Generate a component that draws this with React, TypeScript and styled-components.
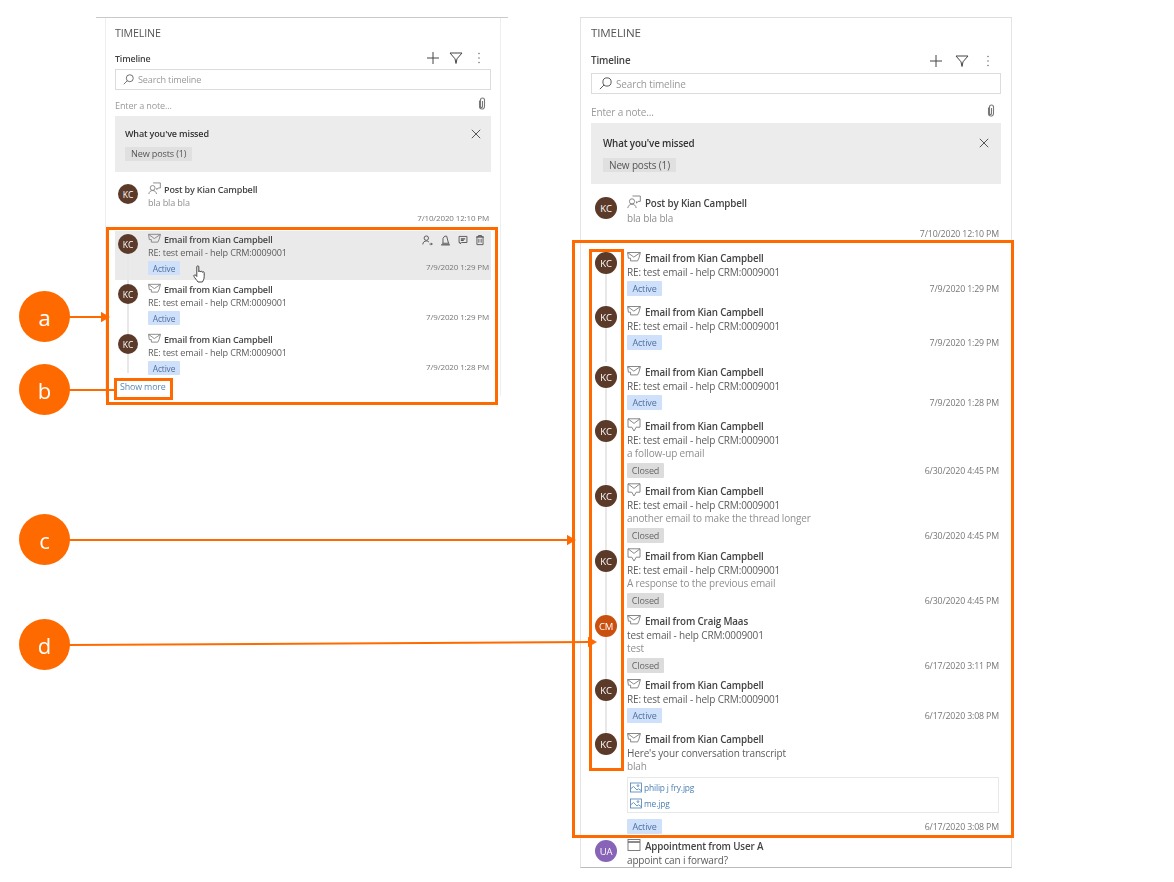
import React from "react";
import styled, { createGlobalStyle, ThemeProvider } from "styled-components";

const ORANGE = "#ff6a00";

const small = {
  label: 10.7,
  labelH: 29,
  toolH: 22,
  toolTitle: 8.9,
  toolGap: 9,
  toolPad: 5,
  noteH: 26,
  notePad: 4,
  clipPad: 5,
  missedX: 10,
  missedTop: 11,
  missedGap: 7,
  missedBottom: 11,
  title: 9,
  body: 9.1,
  date: 8,
  dateLift: 3,
  pill: 8.4,
  avatar: 20,
  avatarText: 8.5,
  avatarTop: 1,
  rowX: 3,
  rowTop: 2,
  line: 13,
  pillH: 14,
  pillW: 32,
  footGap: 2,
  rowPad: 6,
  icon: 13,
  iconGap: 3,
  searchIcon: 11,
  postTop: 11,
  postBodyGap: 0,
  postDateGap: 2,
  postBottom: 7,
};

const large = {
  label: 11.6,
  labelH: 30,
  toolH: 25,
  toolTitle: 9.8,
  toolGap: 12,
  toolPad: 6,
  noteH: 29,
  notePad: 7,
  clipPad: 6,
  missedX: 12,
  missedTop: 13,
  missedGap: 8,
  missedBottom: 12,
  title: 9.8,
  body: 10,
  date: 8.8,
  dateLift: 0,
  pill: 9,
  avatar: 22,
  avatarText: 9.5,
  avatarTop: 1,
  rowX: 4,
  rowTop: 3,
  line: 14,
  pillH: 15,
  pillW: 35,
  footGap: 2,
  rowPad: 6,
  icon: 14,
  iconGap: 4,
  searchIcon: 13,
  postTop: 12,
  postBodyGap: 2,
  postDateGap: 2,
  postBottom: 8,
};

type Status = "Active" | "Closed";
type IconKind = "open" | "closed";

interface IEntry {
  initials?: string;
  from?: string;
  subject?: string;
  extra?: string;
  status: Status;
  date: string;
  icon?: IconKind;
  gap?: number;
  hovered?: boolean;
  files?: string[];
}

const leftEntries: IEntry[] = [
  { status: "Active", date: "7/9/2020 1:29 PM", gap: 1, hovered: true },
  { status: "Active", date: "7/9/2020 1:29 PM" },
  { status: "Active", date: "7/9/2020 1:28 PM" },
];

const rightEntries: IEntry[] = [
  { status: "Active", date: "7/9/2020 1:29 PM" },
  { status: "Active", date: "7/9/2020 1:29 PM", gap: 6 },
  { status: "Active", date: "7/9/2020 1:28 PM" },
  { status: "Closed", date: "6/30/2020 4:45 PM", icon: "closed", extra: "a follow-up email" },
  { status: "Closed", date: "6/30/2020 4:45 PM", icon: "closed", extra: "another email to make the thread longer" },
  { status: "Closed", date: "6/30/2020 4:45 PM", icon: "closed", extra: "A response to the previous email" },
  { initials: "CM", from: "Craig Maas", subject: "test email - help CRM:0009001", status: "Closed", date: "6/17/2020 3:11 PM", extra: "test", gap: -1 },
  { status: "Active", date: "6/17/2020 3:08 PM" },
  {
    subject: "Here's your conversation transcript",
    extra: "blah",
    status: "Active",
    date: "6/17/2020 3:08 PM",
    files: ["philip j fry.jpg", "me.jpg"],
    gap: -1,
  },
];

const EmailIcon = ({ kind = "open" }: { kind?: IconKind }) =>
  kind === "closed" ? (
    <svg width="100%" height="100%" viewBox="0 0 14 14" fill="none" stroke="#7a7a7a" strokeWidth="0.9">
      <path d="M1 .8h12v8.4H9.2L7 13 4.8 9.2H1z" />
      <path d="M1 .8l6 4.6 6-4.6" />
    </svg>
  ) : (
    <svg width="100%" height="100%" viewBox="0 0 14 14" fill="none" stroke="#7a7a7a" strokeWidth="0.9">
      <path d="M.6 2.5h12.8l-1.4 5.4-1.4 3H3.6V8.2H1.4z" />
      <path d="M.8 2.7l6 4.4 6.4-4.4" />
    </svg>
  );

const PostIcon = () => (
  <svg width="100%" height="100%" viewBox="0 0 14 14" fill="none" stroke="#7a7a7a" strokeWidth="0.9">
    <circle cx="5" cy="6.4" r="2.6" />
    <path d="M.8 13c.4-2.4 2-3.8 4.2-3.8s3.8 1.4 4.2 3.8" />
    <path d="M5.5 1h7.8v5.4h-2.2L9.5 8.2V6.4" />
  </svg>
);

const CalendarIcon = () => (
  <svg width="100%" height="100%" viewBox="0 0 14 14" fill="none" stroke="#6f6f6f" strokeWidth="0.9">
    <rect x="1" y="1.5" width="12" height="11" />
    <path d="M1 4h12" strokeWidth="1.6" />
  </svg>
);

const ImageFileIcon = () => (
  <svg width="12" height="11" viewBox="0 0 12 11" fill="none" stroke="#4a7fb5" strokeWidth="0.8">
    <rect x=".5" y="1" width="11" height="9" />
    <path d="M.5 7l3-2.5L7 8l1.5-1.2 3 2" />
    <circle cx="8" cy="3.6" r="0.9" />
  </svg>
);

const PersonArrowIcon = () => (
  <svg width="11" height="11" viewBox="0 0 14 14" fill="none" stroke="#555" strokeWidth="1.2">
    <circle cx="5.5" cy="4" r="2.8" />
    <path d="M1 12c.3-3 2-4.4 4.5-4.4 1.4 0 2.5.4 3.3 1.3" />
    <path d="M9.5 11.5h3.5M11.6 10l1.4 1.5-1.4 1.5" />
  </svg>
);

const BellIcon = () => (
  <svg width="11" height="11" viewBox="0 0 14 14" fill="none" stroke="#555" strokeWidth="1.2">
    <path d="M3.8 10.5V4.2L6 1.5h2.5L10.8 10.5" />
    <path d="M1.5 12.5h11" strokeWidth="1.6" />
    <path d="M2.8 10.5h9" />
  </svg>
);

const NoteIcon = () => (
  <svg width="10" height="10" viewBox="0 0 14 14" fill="none" stroke="#555" strokeWidth="1.3">
    <path d="M1.5 2h11v8.5H5L3 12.5v-2H1.5z" />
    <path d="M4 5.5h6M4 7.5h4" strokeWidth="1.6" />
  </svg>
);

const TrashIcon = () => (
  <svg width="10" height="12" viewBox="0 0 13 14" fill="none" stroke="#555" strokeWidth="1.2">
    <path d="M2.5 3v10h8V3z" />
    <path d="M1.5 3h10M4.5 3V1.2h4V3" />
    <path d="M5 5.5v5M8 5.5v5" />
  </svg>
);

const PlusIcon = () => (
  <svg width="100%" height="100%" viewBox="0 0 14 14" stroke="#444" strokeWidth="1" fill="none">
    <path d="M7 1v12M1 7h12" />
  </svg>
);

const FunnelIcon = () => (
  <svg width="100%" height="100%" viewBox="0 0 14 14" stroke="#444" strokeWidth="1" fill="none">
    <path d="M1 2h12L8 7.8 7 12.5 6 7.8z" />
  </svg>
);

const DotsIcon = () => (
  <svg width="100%" height="100%" viewBox="0 0 14 14" fill="#777">
    <circle cx="7" cy="2.5" r="0.8" />
    <circle cx="7" cy="7" r="0.8" />
    <circle cx="7" cy="11.5" r="0.8" />
  </svg>
);

const SearchIcon = () => (
  <svg width="100%" height="100%" viewBox="0 0 12 12" fill="none" stroke="#555" strokeWidth="0.9">
    <circle cx="7.4" cy="4.6" r="3.8" />
    <path d="M4.7 7.3L.8 11.2" />
  </svg>
);

const ClipIcon = () => (
  <svg width="8" height="13" viewBox="0 0 8 13" fill="none" stroke="#777" strokeWidth="1.1">
    <path d="M1.5 3.5V9.5a2.5 2.5 0 005 0V3a2 2 0 00-4 0v6.5a1 1 0 002 0V4" />
  </svg>
);

const CloseIcon = () => (
  <svg width="10" height="10" viewBox="0 0 10 10" stroke="#555" strokeWidth="1" fill="none">
    <path d="M.8.8l8.4 8.4M9.2.8L.8 9.2" />
  </svg>
);

const HandCursor = () => (
  <svg width="14" height="18" viewBox="0 0 14 18" fill="#fff" stroke="#333" strokeWidth="0.9">
    <path d="M3.8 1.8c0-1.3 2-1.3 2 0v5c0-1 1.8-1 1.8.2 0-1 1.8-1 1.8.3 0-.9 1.8-.8 1.8.5v3.7c0 2.5-1.2 4.5-1.8 5.5H5c-1-1.6-3.5-4.3-4-5.5-.6-1.5 1-2.2 2-1l.8 1z" />
  </svg>
);

const EntryRow = ({ entry, line = "full" }: { entry: IEntry; line?: "full" | "short" | "none" }) => (
  <Row $gap={entry.gap} $hovered={entry.hovered} $extra={!!entry.extra}>
    <Avatar $color={entry.initials === "CM" ? "#ca5010" : "#5b3a29"}>{entry.initials || "KC"}</Avatar>
    {line !== "none" && <Connector $short={line === "short"} />}
    <Content>
      <Head>
        <HeadIcon>
          <EmailIcon kind={entry.icon} />
        </HeadIcon>
        <Title>Email from {entry.from || "Kian Campbell"}</Title>
      </Head>
      <Subject>{entry.subject || "RE: test email - help CRM:0009001"}</Subject>
      {entry.extra && <Extra>{entry.extra}</Extra>}
      {entry.files && (
        <Files>
          {entry.files.map((file) => (
            <FileLink key={file}>
              <ImageFileIcon />
              {file}
            </FileLink>
          ))}
        </Files>
      )}
      <Foot>
        <Pill $status={entry.status}>{entry.status}</Pill>
        <DateText>{entry.date}</DateText>
      </Foot>
    </Content>
    {entry.hovered && (
      <>
        <RowActions>
          <PersonArrowIcon />
          <BellIcon />
          <NoteIcon />
          <TrashIcon />
        </RowActions>
        <Cursor>
          <HandCursor />
        </Cursor>
      </>
    )}
  </Row>
);

const PanelHead = () => (
  <>
    <Label>TIMELINE</Label>
    <ToolRow>
      <ToolTitle>Timeline</ToolTitle>
      <ToolIcons>
        <ToolIcon>
          <PlusIcon />
        </ToolIcon>
        <ToolIcon>
          <FunnelIcon />
        </ToolIcon>
        <ToolIcon>
          <DotsIcon />
        </ToolIcon>
      </ToolIcons>
    </ToolRow>
    <Search>
      <SearchGlyph>
        <SearchIcon />
      </SearchGlyph>
      Search timeline
    </Search>
    <NoteRow>
      Enter a note...
      <ClipSlot>
        <ClipIcon />
      </ClipSlot>
    </NoteRow>
    <Missed>
      <MissedTop>
        What you've missed
        <CloseIcon />
      </MissedTop>
      <MissedPill>New posts (1)</MissedPill>
    </Missed>
    <PostRow>
      <Avatar $color="#5b3a29">KC</Avatar>
      <Content>
        <Head>
          <HeadIcon>
            <PostIcon />
          </HeadIcon>
          <Title>Post by Kian Campbell</Title>
        </Head>
        <PostBody>bla bla bla</PostBody>
        <PostDate>7/10/2020 12:10 PM</PostDate>
      </Content>
    </PostRow>
  </>
);

export default function App() {
  return (
    <Page>
      <GlobalStyle />
      <Blurred>
        <ThemeProvider theme={small}>
          <LeftPanel>
            <LeftInner>
              <PanelHead />
              {leftEntries.map((entry, i) => (
                <EntryRow key={i} entry={entry} line={i === leftEntries.length - 1 ? "short" : "full"} />
              ))}
              <ShowMore>Show more</ShowMore>
            </LeftInner>
          </LeftPanel>
        </ThemeProvider>
        <ThemeProvider theme={large}>
          <RightPanel>
            <PanelHead />
            {rightEntries.map((entry, i) => (
              <EntryRow key={i} entry={entry} line={i === rightEntries.length - 1 ? "none" : "full"} />
            ))}
            <Row>
              <Avatar $color="#8764b8">UA</Avatar>
              <Content>
                <Head>
                  <HeadIcon>
                    <CalendarIcon />
                  </HeadIcon>
                  <Title>Appointment from User A</Title>
                </Head>
                <Subject>appoint can i forward?</Subject>
              </Content>
            </Row>
          </RightPanel>
        </ThemeProvider>
      </Blurred>

      <Frame $x={106} $y={227} $w={392} $h={178} />
      <Frame $x={114} $y={378} $w={59} $h={22} />
      <Frame $x={572} $y={240} $w={442} $h={598} />
      <Frame $x={589} $y={249} $w={35} $h={522} />

      <Arrows width="1174" height="882" viewBox="0 0 1174 882" fill="none" stroke={ORANGE} strokeWidth="2">
        <path d="M68 317H103" />
        <path d="M102 313.5l6 3.5-6 3.5z" fill={ORANGE} />
        <path d="M68 390H114" />
        <path d="M68 540H569" />
        <path d="M568 536.5l6 3.5-6 3.5z" fill={ORANGE} />
        <path d="M68 645L590 642" />
        <path d="M589 638.5l6 3.5-6 3.5z" fill={ORANGE} />
      </Arrows>

      <Callout $y={291}>a</Callout>
      <Callout $y={364}>b</Callout>
      <Callout $y={514}>c</Callout>
      <Callout $y={619}>d</Callout>
    </Page>
  );
}

const GlobalStyle = createGlobalStyle`
  html, body {
    margin: 0;
    padding: 0;
    background: #fff;
  }
  body {
    font-family: "Open Sans", "Liberation Sans", sans-serif;
  }
  svg {
    display: block;
  }
`;

const Page = styled.div`
  position: relative;
  width: 1174px;
  height: 882px;
  overflow: hidden;
  background: #fff;
`;

const Blurred = styled.div`
  display: flex;
  align-items: flex-start;
  padding: 17px 0 0 96px;
  letter-spacing: -0.15px;
  filter: blur(0.45px);
`;

const LeftPanel = styled.section`
  width: 412px;
  padding: 0 7px 0 9px;
  box-sizing: border-box;
  border-top: 1px solid #c9c9c9;
`;

const LeftInner = styled.div`
  height: 378px;
  padding: 0 9px;
  border-left: 1px solid #eee;
  border-right: 1px solid #eee;
`;

const RightPanel = styled.section`
  width: 432px;
  height: 851px;
  margin-left: 72px;
  padding: 0 10px;
  box-sizing: border-box;
  overflow: hidden;
  border: 1px solid #e4e4e4;
  border-top-color: #ddd;
  border-bottom-color: #bbb;
`;

const Label = styled.div`
  height: ${(p) => p.theme.labelH}px;
  line-height: 30px;
  font-size: ${(p) => p.theme.label}px;
  color: #555;
`;

const ToolRow = styled.div`
  display: flex;
  align-items: center;
  justify-content: space-between;
  height: ${(p) => p.theme.toolH}px;
`;

const ToolTitle = styled.div`
  font-size: ${(p) => p.theme.toolTitle}px;
  font-weight: 600;
  color: #444;
`;

const ToolIcons = styled.div`
  display: flex;
  gap: ${(p) => p.theme.toolGap}px;
  padding-right: ${(p) => p.theme.toolPad}px;
`;

const ToolIcon = styled.span`
  display: block;
  width: 14px;
  height: 14px;
`;

const Search = styled.div`
  display: flex;
  align-items: center;
  gap: 4px;
  height: 21px;
  box-sizing: border-box;
  padding-left: 7px;
  border: 1px solid #dcdcdc;
  font-size: ${(p) => p.theme.body}px;
  color: #9a9a9a;
`;

const SearchGlyph = styled.span`
  flex: none;
  display: block;
  width: ${(p) => p.theme.searchIcon}px;
  height: ${(p) => p.theme.searchIcon}px;
`;

const NoteRow = styled.div`
  display: flex;
  align-items: center;
  justify-content: space-between;
  height: ${(p) => p.theme.noteH}px;
  box-sizing: border-box;
  padding: ${(p) => p.theme.notePad}px ${(p) => p.theme.clipPad}px 0 0;
  font-size: ${(p) => p.theme.body}px;
  color: #9a9a9a;
`;

const ClipSlot = styled.span`
  display: block;
  margin-top: -3px;
`;

const Missed = styled.div`
  padding: ${(p) => p.theme.missedTop}px ${(p) => p.theme.missedX}px ${(p) => p.theme.missedBottom}px;
  background: #ececec;
`;

const MissedTop = styled.div`
  display: flex;
  align-items: center;
  justify-content: space-between;
  height: ${(p) => p.theme.line}px;
  font-size: ${(p) => p.theme.title}px;
  font-weight: 600;
  color: #333;
`;

const MissedPill = styled.div`
  display: table;
  margin-top: ${(p) => p.theme.missedGap}px;
  padding: 0 6px;
  line-height: 14px;
  background: #e0e0e0;
  font-size: ${(p) => p.theme.body}px;
  color: #555;
`;

const Row = styled.article<{ $gap?: number; $hovered?: boolean; $extra?: boolean }>`
  position: relative;
  display: flex;
  padding: ${(p) => p.theme.rowTop}px 2px 0 ${(p) => p.theme.rowX}px;
  padding-bottom: ${(p) => (p.$extra ? 3 : p.$hovered ? p.theme.rowPad - 1 : p.theme.rowPad)}px;
  margin-bottom: ${(p) => p.$gap || 0}px;
  background: ${(p) => (p.$hovered ? "#eaeaea" : "transparent")};
`;

const PostRow = styled.article`
  display: flex;
  padding: ${(p) => p.theme.postTop}px 2px ${(p) => p.theme.postBottom}px ${(p) => p.theme.rowX}px;
`;

const Avatar = styled.div<{ $color: string }>`
  flex: none;
  position: relative;
  z-index: 1;
  display: flex;
  align-items: center;
  justify-content: center;
  width: ${(p) => p.theme.avatar}px;
  height: ${(p) => p.theme.avatar}px;
  margin: ${(p) => p.theme.avatarTop}px 10px 0 0;
  border-radius: 50%;
  background: ${(p) => p.$color};
  color: #fff;
  font-size: ${(p) => p.theme.avatarText}px;
`;

const Connector = styled.span<{ $short?: boolean }>`
  position: absolute;
  left: ${(p) => p.theme.rowX + p.theme.avatar / 2 - 1}px;
  top: 20px;
  bottom: ${(p) => (p.$short ? "8px" : "-6px")};
  width: 2px;
  background: #e8e8e8;
`;

const Content = styled.div`
  flex: 1;
  min-width: 0;
`;

const Head = styled.div`
  display: flex;
  align-items: center;
  gap: ${(p) => p.theme.iconGap}px;
  height: ${(p) => p.theme.line}px;
`;

const HeadIcon = styled.span`
  flex: none;
  display: block;
  width: ${(p) => p.theme.icon}px;
  height: ${(p) => p.theme.icon}px;
  margin-top: -2px;
`;

const Title = styled.div`
  font-size: ${(p) => p.theme.title}px;
  font-weight: 600;
  color: #444;
  white-space: nowrap;
`;

const Subject = styled.div`
  height: ${(p) => p.theme.line}px;
  line-height: ${(p) => p.theme.line}px;
  font-size: ${(p) => p.theme.body}px;
  color: #5c5c5c;
  white-space: nowrap;
`;

const Extra = styled(Subject)`
  height: 14px;
  line-height: 13px;
  color: #8f8f8f;
`;

const PostBody = styled(Extra)`
  margin-top: ${(p) => p.theme.postBodyGap}px;
`;

const Files = styled.div`
  margin: 3px 0 6px;
  padding: 1px 2px;
  border: 1px solid #e8e8e8;
`;

const FileLink = styled.div`
  display: flex;
  align-items: center;
  gap: 2px;
  height: 16px;
  font-size: 8.4px;
  color: #4a7fb5;
`;

const Foot = styled.div`
  display: flex;
  align-items: center;
  justify-content: space-between;
  margin-top: ${(p) => p.theme.footGap}px;
`;

const Pill = styled.span<{ $status: Status }>`
  display: flex;
  align-items: center;
  justify-content: center;
  width: ${(p) => p.theme.pillW + (p.$status === "Closed" ? 2 : 0)}px;
  height: ${(p) => p.theme.pillH}px;
  background: ${(p) => (p.$status === "Active" ? "#cfe0fb" : "#dcdcdc")};
  border-radius: 1px;
  font-size: ${(p) => p.theme.pill}px;
  color: ${(p) => (p.$status === "Active" ? "#4f6f9e" : "#666")};
`;

const DateText = styled.span`
  margin-bottom: ${(p) => p.theme.dateLift}px;
  font-size: ${(p) => p.theme.date}px;
  color: #777;
`;

const PostDate = styled.div`
  height: 12px;
  line-height: 12px;
  margin-top: ${(p) => p.theme.postDateGap}px;
  text-align: right;
  font-size: ${(p) => p.theme.date}px;
  color: #777;
`;

const ShowMore = styled.div`
  height: 12px;
  line-height: 12px;
  padding-left: 5px;
  font-size: 8.9px;
  color: #5a88b5;
`;

const RowActions = styled.div`
  position: absolute;
  top: 3px;
  right: 6px;
  display: flex;
  align-items: center;
  gap: 7px;
`;

const Cursor = styled.span`
  position: absolute;
  left: 78px;
  top: 34px;
`;

const Frame = styled.div<{ $x: number; $y: number; $w: number; $h: number }>`
  position: absolute;
  left: ${(p) => p.$x}px;
  top: ${(p) => p.$y}px;
  width: ${(p) => p.$w}px;
  height: ${(p) => p.$h}px;
  box-sizing: border-box;
  border: 3px solid ${ORANGE};
`;

const Arrows = styled.svg`
  position: absolute;
  left: 0;
  top: 0;
`;

const Callout = styled.div<{ $y: number }>`
  position: absolute;
  left: 19px;
  top: ${(p) => p.$y}px;
  display: flex;
  align-items: center;
  justify-content: center;
  width: 51px;
  height: 51px;
  border-radius: 50%;
  background: ${ORANGE};
  color: #fff;
  font-size: 22px;
  line-height: 1;
`;
